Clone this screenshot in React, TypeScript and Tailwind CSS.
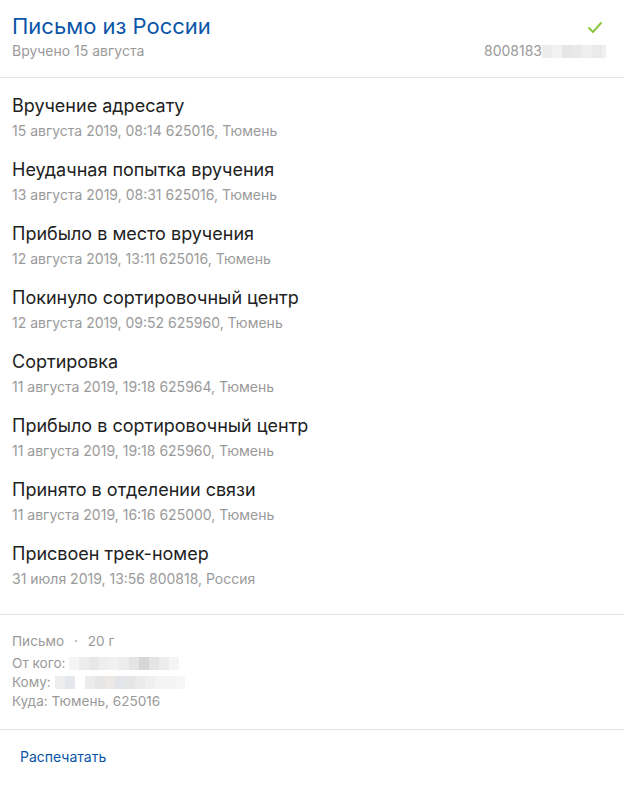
import React from "react";

const events = [
  { title: "Вручение адресату", meta: "15 августа 2019, 08:14 625016, Тюмень" },
  { title: "Неудачная попытка вручения", meta: "13 августа 2019, 08:31 625016, Тюмень" },
  { title: "Прибыло в место вручения", meta: "12 августа 2019, 13:11 625016, Тюмень" },
  { title: "Покинуло сортировочный центр", meta: "12 августа 2019, 09:52 625960, Тюмень" },
  { title: "Сортировка", meta: "11 августа 2019, 19:18 625964, Тюмень" },
  { title: "Прибыло в сортировочный центр", meta: "11 августа 2019, 19:18 625960, Тюмень" },
  { title: "Принято в отделении связи", meta: "11 августа 2019, 16:16 625000, Тюмень" },
  { title: "Присвоен трек-номер", meta: "31 июля 2019, 13:56 800818, Россия" },
];

// pixelated stand-in for hidden personal data
const Blur = ({ cells }: { cells: string[] }) => (
  <span className="inline-flex h-[13px] align-middle">
    {cells.map((c, i) => (
      <span key={i} className="h-full w-[10px]" style={{ backgroundColor: c }} />
    ))}
  </span>
);

export default function App() {
  return (
    <div className="min-h-screen w-[624px] bg-white font-['Inter',sans-serif] text-[#222]">
      <div className="flex items-start justify-between border-b border-[#e4e4e4] pl-3 pr-[18px] pt-3 pb-[17px]">
        <div>
          <div className="text-[22px] leading-[28px] text-[#0a55a8]">Письмо из России</div>
          <div className="mt-[2px] text-[14px] leading-[18px] text-[#9a9a9a]">Вручено 15 августа</div>
        </div>
        <div className="flex flex-col items-end">
          <svg width="16" height="13" viewBox="0 0 16 13" className="mt-[9px] mr-[3px]">
            <path d="M1.5 6.5 L6 11 L14.5 1.5" fill="none" stroke="#8cc63f" strokeWidth="2" />
          </svg>
          <div className="mt-[8px] flex items-center text-[14px] leading-[18px] text-[#9a9a9a]">
            8008183
            <Blur cells={["#ececec", "#f2f2f2", "#e6e6e6", "#e9e9e9", "#efefef", "#eaeaea"]} />
            <span className="h-[13px] w-[4px] bg-[#f0f0f0]" />
          </div>
        </div>
      </div>

      <div className="flex flex-col gap-[17px] border-b border-[#e4e4e4] pl-3 pt-4 pb-[25px]">
        {events.map((e) => (
          <div key={e.title}>
            <div className="text-[18px] leading-[24px] text-[#222]">{e.title}</div>
            <div className="mt-[3px] text-[14px] leading-[20px] text-[#9a9a9a]">{e.meta}</div>
          </div>
        ))}
      </div>

      <div className="border-b border-[#e4e4e4] pl-3 pt-4 pb-[18px] text-[13.6px] leading-[20px] text-[#9a9a9a]">
        <div>
          Письмо <span className="mx-[6px]">·</span> 20 г
        </div>
        <div className="mt-[3px] flex items-center leading-[19px]">
          От кого:&nbsp;
          <Blur cells={["#f4f4f4", "#ececec", "#e8e8e8", "#eeeeee", "#f1f1f1", "#ececec", "#e4e4e4", "#d6d6d6", "#e4e4e4", "#ececec", "#f4f4f4"]} />
        </div>
        <div className="flex items-center leading-[19px]">
          Кому:&nbsp;
          <Blur cells={["#eeeeee", "#e4e8ec", "#ffffff", "#ececec", "#e6e6e6", "#ebe8e6", "#e2e6ea", "#e6e6e6", "#eaeaea", "#f0f0f0", "#f4f4f4", "#f4f4f4", "#f6f6f6"]} />
        </div>
        <div className="leading-[19px]">Куда: Тюмень, 625016</div>
      </div>

      <div className="pl-5 pt-[17px] text-[14px] leading-[20px] text-[#0a55a8]">Распечатать</div>
    </div>
  );
}
